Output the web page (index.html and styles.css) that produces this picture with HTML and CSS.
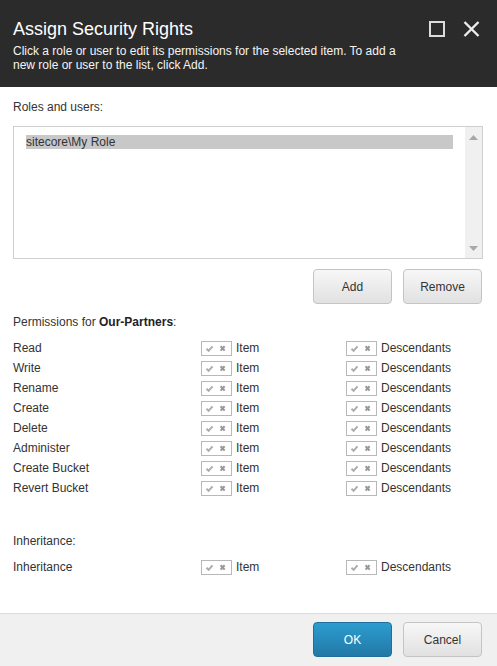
FILE: index.html
```html
<!DOCTYPE html>
<html>
<head>
<meta charset="utf-8">
<link rel="stylesheet" href="styles.css">
</head>
<body>
<div class="dialog">
  <div class="header">
    <div class="header-text">
      <div class="title">Assign Security Rights</div>
      <div class="subtitle">Click a role or user to edit its permissions for the selected item. To add a new role or user to the list, click Add.</div>
    </div>
    <div class="header-icons">
      <svg class="hicon" width="16" height="16" viewBox="0 0 16 16"><rect x="1" y="1" width="14" height="14" fill="none" stroke="#dcdcdc" stroke-width="2"/></svg>
      <svg class="hicon" width="17" height="16" viewBox="0 0 17 16"><path d="M1.5 1 L15.5 15 M15.5 1 L1.5 15" stroke="#ececec" stroke-width="2.4" fill="none"/></svg>
    </div>
  </div>

  <div class="content">
    <div class="label">Roles and users:</div>
    <div class="listbox">
      <div class="list-items">
        <div class="list-item selected">sitecore\My Role</div>
      </div>
      <div class="scrollbar">
        <svg width="9" height="5" viewBox="0 0 9 5"><path d="M0 5 L4.5 0 L9 5 Z" fill="#a8a8a8"/></svg>
        <svg width="9" height="5" viewBox="0 0 9 5"><path d="M0 0 L4.5 5 L9 0 Z" fill="#a8a8a8"/></svg>
      </div>
    </div>
    <div class="btn-row">
      <button class="btn">Add</button>
      <button class="btn">Remove</button>
    </div>

    <div class="label perm-heading">Permissions for <b>Our-Partners</b>:</div>
    <div class="perm-grid">
      <div class="perm-row"><span class="perm-name">Read</span><span class="cell"><span class="tri"><svg width="31" height="15" viewBox="0 0 31 15"><path d="M5.5 7.8 L7.6 9.8 L11.5 5.3" stroke="#adadad" stroke-width="2" fill="none"/><path d="M19.6 5.2 L23.6 9.6 M23.6 5.2 L19.6 9.6" stroke="#999" stroke-width="2.1" fill="none"/></svg></span>Item</span><span class="cell"><span class="tri"><svg width="31" height="15" viewBox="0 0 31 15"><path d="M5.5 7.8 L7.6 9.8 L11.5 5.3" stroke="#adadad" stroke-width="2" fill="none"/><path d="M19.6 5.2 L23.6 9.6 M23.6 5.2 L19.6 9.6" stroke="#999" stroke-width="2.1" fill="none"/></svg></span>Descendants</span></div>
      <div class="perm-row"><span class="perm-name">Write</span><span class="cell"><span class="tri"><svg width="31" height="15" viewBox="0 0 31 15"><path d="M5.5 7.8 L7.6 9.8 L11.5 5.3" stroke="#adadad" stroke-width="2" fill="none"/><path d="M19.6 5.2 L23.6 9.6 M23.6 5.2 L19.6 9.6" stroke="#999" stroke-width="2.1" fill="none"/></svg></span>Item</span><span class="cell"><span class="tri"><svg width="31" height="15" viewBox="0 0 31 15"><path d="M5.5 7.8 L7.6 9.8 L11.5 5.3" stroke="#adadad" stroke-width="2" fill="none"/><path d="M19.6 5.2 L23.6 9.6 M23.6 5.2 L19.6 9.6" stroke="#999" stroke-width="2.1" fill="none"/></svg></span>Descendants</span></div>
      <div class="perm-row"><span class="perm-name">Rename</span><span class="cell"><span class="tri"><svg width="31" height="15" viewBox="0 0 31 15"><path d="M5.5 7.8 L7.6 9.8 L11.5 5.3" stroke="#adadad" stroke-width="2" fill="none"/><path d="M19.6 5.2 L23.6 9.6 M23.6 5.2 L19.6 9.6" stroke="#999" stroke-width="2.1" fill="none"/></svg></span>Item</span><span class="cell"><span class="tri"><svg width="31" height="15" viewBox="0 0 31 15"><path d="M5.5 7.8 L7.6 9.8 L11.5 5.3" stroke="#adadad" stroke-width="2" fill="none"/><path d="M19.6 5.2 L23.6 9.6 M23.6 5.2 L19.6 9.6" stroke="#999" stroke-width="2.1" fill="none"/></svg></span>Descendants</span></div>
      <div class="perm-row"><span class="perm-name">Create</span><span class="cell"><span class="tri"><svg width="31" height="15" viewBox="0 0 31 15"><path d="M5.5 7.8 L7.6 9.8 L11.5 5.3" stroke="#adadad" stroke-width="2" fill="none"/><path d="M19.6 5.2 L23.6 9.6 M23.6 5.2 L19.6 9.6" stroke="#999" stroke-width="2.1" fill="none"/></svg></span>Item</span><span class="cell"><span class="tri"><svg width="31" height="15" viewBox="0 0 31 15"><path d="M5.5 7.8 L7.6 9.8 L11.5 5.3" stroke="#adadad" stroke-width="2" fill="none"/><path d="M19.6 5.2 L23.6 9.6 M23.6 5.2 L19.6 9.6" stroke="#999" stroke-width="2.1" fill="none"/></svg></span>Descendants</span></div>
      <div class="perm-row"><span class="perm-name">Delete</span><span class="cell"><span class="tri"><svg width="31" height="15" viewBox="0 0 31 15"><path d="M5.5 7.8 L7.6 9.8 L11.5 5.3" stroke="#adadad" stroke-width="2" fill="none"/><path d="M19.6 5.2 L23.6 9.6 M23.6 5.2 L19.6 9.6" stroke="#999" stroke-width="2.1" fill="none"/></svg></span>Item</span><span class="cell"><span class="tri"><svg width="31" height="15" viewBox="0 0 31 15"><path d="M5.5 7.8 L7.6 9.8 L11.5 5.3" stroke="#adadad" stroke-width="2" fill="none"/><path d="M19.6 5.2 L23.6 9.6 M23.6 5.2 L19.6 9.6" stroke="#999" stroke-width="2.1" fill="none"/></svg></span>Descendants</span></div>
      <div class="perm-row"><span class="perm-name">Administer</span><span class="cell"><span class="tri"><svg width="31" height="15" viewBox="0 0 31 15"><path d="M5.5 7.8 L7.6 9.8 L11.5 5.3" stroke="#adadad" stroke-width="2" fill="none"/><path d="M19.6 5.2 L23.6 9.6 M23.6 5.2 L19.6 9.6" stroke="#999" stroke-width="2.1" fill="none"/></svg></span>Item</span><span class="cell"><span class="tri"><svg width="31" height="15" viewBox="0 0 31 15"><path d="M5.5 7.8 L7.6 9.8 L11.5 5.3" stroke="#adadad" stroke-width="2" fill="none"/><path d="M19.6 5.2 L23.6 9.6 M23.6 5.2 L19.6 9.6" stroke="#999" stroke-width="2.1" fill="none"/></svg></span>Descendants</span></div>
      <div class="perm-row"><span class="perm-name">Create Bucket</span><span class="cell"><span class="tri"><svg width="31" height="15" viewBox="0 0 31 15"><path d="M5.5 7.8 L7.6 9.8 L11.5 5.3" stroke="#adadad" stroke-width="2" fill="none"/><path d="M19.6 5.2 L23.6 9.6 M23.6 5.2 L19.6 9.6" stroke="#999" stroke-width="2.1" fill="none"/></svg></span>Item</span><span class="cell"><span class="tri"><svg width="31" height="15" viewBox="0 0 31 15"><path d="M5.5 7.8 L7.6 9.8 L11.5 5.3" stroke="#adadad" stroke-width="2" fill="none"/><path d="M19.6 5.2 L23.6 9.6 M23.6 5.2 L19.6 9.6" stroke="#999" stroke-width="2.1" fill="none"/></svg></span>Descendants</span></div>
      <div class="perm-row"><span class="perm-name">Revert Bucket</span><span class="cell"><span class="tri"><svg width="31" height="15" viewBox="0 0 31 15"><path d="M5.5 7.8 L7.6 9.8 L11.5 5.3" stroke="#adadad" stroke-width="2" fill="none"/><path d="M19.6 5.2 L23.6 9.6 M23.6 5.2 L19.6 9.6" stroke="#999" stroke-width="2.1" fill="none"/></svg></span>Item</span><span class="cell"><span class="tri"><svg width="31" height="15" viewBox="0 0 31 15"><path d="M5.5 7.8 L7.6 9.8 L11.5 5.3" stroke="#adadad" stroke-width="2" fill="none"/><path d="M19.6 5.2 L23.6 9.6 M23.6 5.2 L19.6 9.6" stroke="#999" stroke-width="2.1" fill="none"/></svg></span>Descendants</span></div>
    </div>

    <div class="label inh-heading">Inheritance:</div>
    <div class="perm-grid">
      <div class="perm-row"><span class="perm-name">Inheritance</span><span class="cell"><span class="tri"><svg width="31" height="15" viewBox="0 0 31 15"><path d="M5.5 7.8 L7.6 9.8 L11.5 5.3" stroke="#adadad" stroke-width="2" fill="none"/><path d="M19.6 5.2 L23.6 9.6 M23.6 5.2 L19.6 9.6" stroke="#999" stroke-width="2.1" fill="none"/></svg></span>Item</span><span class="cell"><span class="tri"><svg width="31" height="15" viewBox="0 0 31 15"><path d="M5.5 7.8 L7.6 9.8 L11.5 5.3" stroke="#adadad" stroke-width="2" fill="none"/><path d="M19.6 5.2 L23.6 9.6 M23.6 5.2 L19.6 9.6" stroke="#999" stroke-width="2.1" fill="none"/></svg></span>Descendants</span></div>
    </div>
  </div>

  <div class="footer">
    <button class="btn btn-primary">OK</button>
    <button class="btn">Cancel</button>
  </div>
</div>
</body>
</html>
```
FILE: styles.css
```css
* { box-sizing: border-box; }
html, body { margin: 0; padding: 0; }
body {
  font-family: "Liberation Sans", Arial, sans-serif;
  font-size: 12px;
  color: #333;
  background: #fff;
}
.dialog {
  width: 497px;
  height: 666px;
  display: flex;
  flex-direction: column;
}
.header {
  background: #2b2b2b;
  color: #fff;
  height: 87px;
  padding: 18px 17px 0 13px;
  display: flex;
  align-items: flex-start;
  gap: 20px;
}
.header-text { flex: 1; }
.title {
  font-size: 18px;
  line-height: 22px;
  margin-bottom: 4px;
}
.subtitle {
  font-size: 12px;
  line-height: 14px;
  color: #f4f4f4;
}
.header-icons {
  display: flex;
  gap: 18px;
  padding-top: 3px;
}
.hicon { display: block; }

.content {
  flex: 1;
  padding: 13px 14px 0 13px;
}
.label { line-height: 15px; }
.listbox {
  margin-top: 11px;
  height: 133px;
  border: 1px solid #cfcfcf;
  display: flex;
}
.list-items {
  flex: 1;
  padding: 8px 12px 0 12px;
}
.list-item { line-height: 14px; }
.list-item.selected { background: #c8c8c8; }
.scrollbar {
  width: 17px;
  background: #f0f0f0;
  display: flex;
  flex-direction: column;
  justify-content: space-between;
  align-items: center;
  padding: 8px 0 7px;
}
.scrollbar svg { display: block; }

.btn-row {
  display: flex;
  justify-content: flex-end;
  gap: 11px;
  margin-top: 10px;
  padding-right: 1px;
}
.btn {
  width: 79px;
  height: 35px;
  border: 1px solid #c4c4c4;
  border-radius: 4px;
  background: linear-gradient(#f7f7f7, #e1e1e1);
  font-family: "Liberation Sans", Arial, sans-serif;
  font-size: 12px;
  color: #333;
  padding: 0;
}
.btn-primary {
  background: linear-gradient(#2c9dcf, #2278a6);
  border-color: #1f6f98;
  color: #fff;
}

.perm-heading { margin-top: 11px; }
.perm-heading b { font-weight: bold; color: #222; }
.perm-grid { margin-top: 8px; }
.perm-row {
  display: grid;
  grid-template-columns: 188px 145px 1fr;
  height: 20px;
  align-items: center;
}
.perm-name { line-height: 15px; padding-top: 1px; }
.cell {
  display: flex;
  align-items: center;
  gap: 4px;
  line-height: 15px;
}
.tri {
  width: 31px;
  height: 15px;
  border: 1px solid #b8b8b8;
  background: #fff;
  display: block;
}
.tri svg {
  display: block;
  margin: -1px;
}
.inh-heading { margin-top: 36px; }

.footer {
  height: 53px;
  background: #f0f0f0;
  border-top: 1px solid #dcdcdc;
  display: flex;
  justify-content: flex-end;
  gap: 11px;
  padding: 8px 15px 0 0;
}
```
